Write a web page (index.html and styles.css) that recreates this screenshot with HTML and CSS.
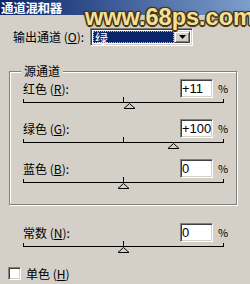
FILE: index.html
```html
<!DOCTYPE html>
<html>
<head>
<meta charset="utf-8">
<link rel="stylesheet" href="styles.css">
</head>
<body>
<div class="dialog">
  <div class="titlebar"><span class="title">通道混和器</span></div>
  <div class="watermark">www.68ps.com</div>

  <div class="output-row">
    <span class="output-label">输出通道 (<u>O</u>):</span>
    <div class="select">
      <div class="select-value"><span>绿</span></div>
      <div class="select-btn"><svg width="7" height="4" viewBox="0 0 7 4"><path d="M0 0h7L3.5 4z" fill="#000"/></svg></div>
    </div>
  </div>

  <div class="group">
    <div class="legend">源通道</div>

    <div class="field">
      <div class="field-top">
        <span class="field-label">红色 (<u>R</u>):</span>
        <div class="num">+11</div>
        <span class="pct">%</span>
      </div>
      <svg class="slider" width="202" height="14" viewBox="0 0 202 14">
        <rect x="0" y="5" width="201" height="1" fill="#000"/>
        <rect x="0" y="2" width="1" height="3" fill="#000"/>
        <rect x="200" y="2" width="1" height="3" fill="#000"/>
        <rect x="100" y="0" width="1" height="5" fill="#000"/>
        <polygon points="106.5,6.5 112,11.5 101,11.5" fill="#d4d0c8" stroke="#000" stroke-width="1"/>
      </svg>
    </div>

    <div class="field">
      <div class="field-top">
        <span class="field-label">绿色 (<u>G</u>):</span>
        <div class="num">+100</div>
        <span class="pct">%</span>
      </div>
      <svg class="slider" width="202" height="14" viewBox="0 0 202 14">
        <rect x="0" y="5" width="201" height="1" fill="#000"/>
        <rect x="0" y="2" width="1" height="3" fill="#000"/>
        <rect x="200" y="2" width="1" height="3" fill="#000"/>
        <rect x="100" y="0" width="1" height="5" fill="#000"/>
        <polygon points="150.5,6.5 156,11.5 145,11.5" fill="#d4d0c8" stroke="#000" stroke-width="1"/>
      </svg>
    </div>

    <div class="field">
      <div class="field-top">
        <span class="field-label">蓝色 (<u>B</u>):</span>
        <div class="num">0</div>
        <span class="pct">%</span>
      </div>
      <svg class="slider" width="202" height="14" viewBox="0 0 202 14">
        <rect x="0" y="5" width="201" height="1" fill="#000"/>
        <rect x="0" y="2" width="1" height="3" fill="#000"/>
        <rect x="200" y="2" width="1" height="3" fill="#000"/>
        <rect x="100" y="0" width="1" height="5" fill="#000"/>
        <polygon points="100.5,6.5 106,11.5 95,11.5" fill="#d4d0c8" stroke="#000" stroke-width="1"/>
      </svg>
    </div>
  </div>

  <div class="field const-field">
    <div class="field-top">
      <span class="field-label">常数 (<u>N</u>):</span>
      <div class="num">0</div>
      <span class="pct">%</span>
    </div>
    <svg class="slider" width="202" height="14" viewBox="0 0 202 14">
      <rect x="0" y="5" width="201" height="1" fill="#000"/>
      <rect x="0" y="2" width="1" height="3" fill="#000"/>
      <rect x="200" y="2" width="1" height="3" fill="#000"/>
      <rect x="100" y="0" width="1" height="5" fill="#000"/>
      <polygon points="100.5,6.5 106,11.5 95,11.5" fill="#d4d0c8" stroke="#000" stroke-width="1"/>
    </svg>
  </div>

  <div class="check-row">
    <div class="checkbox"></div>
    <span class="check-label">单色 (<u>H</u>)</span>
  </div>
</div>
</body>
</html>
```

FILE: styles.css
```css
* {
  box-sizing: border-box;
}

html, body {
  margin: 0;
  padding: 0;
}

body {
  width: 250px;
  height: 284px;
  overflow: hidden;
  background: #d4d0c8;
  font-family: "Noto Sans CJK SC", "Liberation Sans", sans-serif;
  font-size: 12px;
  color: #000;
}

.dialog {
  position: relative;
  width: 250px;
  height: 284px;
}

.titlebar {
  height: 15px;
  padding-left: 1px;
  background: linear-gradient(to right, #0a246a 0, #a6caf0 340px);
  display: flex;
  align-items: center;
}

.title {
  color: #fff;
  font-weight: bold;
  font-size: 12.5px;
  line-height: 15px;
  letter-spacing: -0.3px;
}

.watermark {
  position: absolute;
  left: 85px;
  top: 5px;
  font-family: "Liberation Sans", Arial, sans-serif;
  font-weight: bold;
  font-size: 23.5px;
  line-height: 24px;
  color: #f3e19a;
  text-shadow:
    1.5px 0 0 #4a3412, -1.5px 0 0 #4a3412,
    0 1.5px 0 #4a3412, 0 -1.5px 0 #4a3412,
    1px 1px 0 #4a3412, -1px -1px 0 #4a3412,
    1px -1px 0 #4a3412, -1px 1px 0 #4a3412,
    0 0 3px #3a2808;
}

.output-row {
  display: flex;
  align-items: center;
  margin: 13px 0 0 13px;
  height: 18px;
}

.output-label {
  width: 77px;
  line-height: 18px;
}

.select {
  width: 103px;
  height: 18px;
  display: flex;
  padding: 2px;
  background: #fff;
  border: 1px solid;
  border-color: #808080 #fff #fff #808080;
  box-shadow: inset 1px 1px 0 #404040, inset -1px -1px 0 #d4d0c8;
}

.select-value {
  flex: 1;
  background: #0a246a;
  color: #fff;
  border: 1px dotted #c8c0a0;
  line-height: 12px;
  padding-left: 1px;
  font-size: 13px;
}

.select-btn {
  width: 16px;
  background: #d4d0c8;
  border: 1px solid;
  border-color: #d4d0c8 #404040 #404040 #d4d0c8;
  box-shadow: inset 1px 1px 0 #fff, inset -1px -1px 0 #808080;
  display: flex;
  align-items: center;
  justify-content: center;
}

.select-btn svg {
  display: block;
}

.group {
  margin: 25px 0 0 9px;
  width: 228px;
  border: 1px solid #808080;
  box-shadow: 1px 1px 0 #fff, inset 1px 1px 0 #fff;
  padding: 0 0 5px 13px;
}

.legend {
  width: fit-content;
  height: 14px;
  line-height: 14px;
  margin: -8px 0 1px -2px;
  padding: 0 3px;
  background: #d4d0c8;
}

.field {
  width: 202px;
  margin-bottom: 8px;
}

.field-top {
  display: flex;
  align-items: center;
  height: 19px;
}

.field-label {
  flex: 1;
  line-height: 19px;
}

.num {
  width: 33px;
  height: 19px;
  background: #fff;
  border: 1px solid;
  border-color: #808080 #fff #fff #808080;
  box-shadow: inset 1px 1px 0 #404040, inset -1px -1px 0 #d4d0c8;
  font-family: "Liberation Sans", Arial, sans-serif;
  font-size: 13px;
  line-height: 17px;
  padding-left: 1px;
}

.pct {
  width: 7px;
  margin-left: 5px;
  font-size: 11px;
  line-height: 19px;
}

.slider {
  display: block;
  margin-top: -1px;
}

.const-field {
  margin: 18px 0 0 23px;
}

.check-row {
  display: flex;
  align-items: center;
  margin: 12px 0 0 8px;
  gap: 5px;
}

.checkbox {
  width: 13px;
  height: 13px;
  background: #fff;
  border: 1px solid;
  border-color: #808080 #fff #fff #808080;
  box-shadow: inset 1px 1px 0 #404040, inset -1px -1px 0 #d4d0c8;
}

.check-label {
  line-height: 13px;
}
```
